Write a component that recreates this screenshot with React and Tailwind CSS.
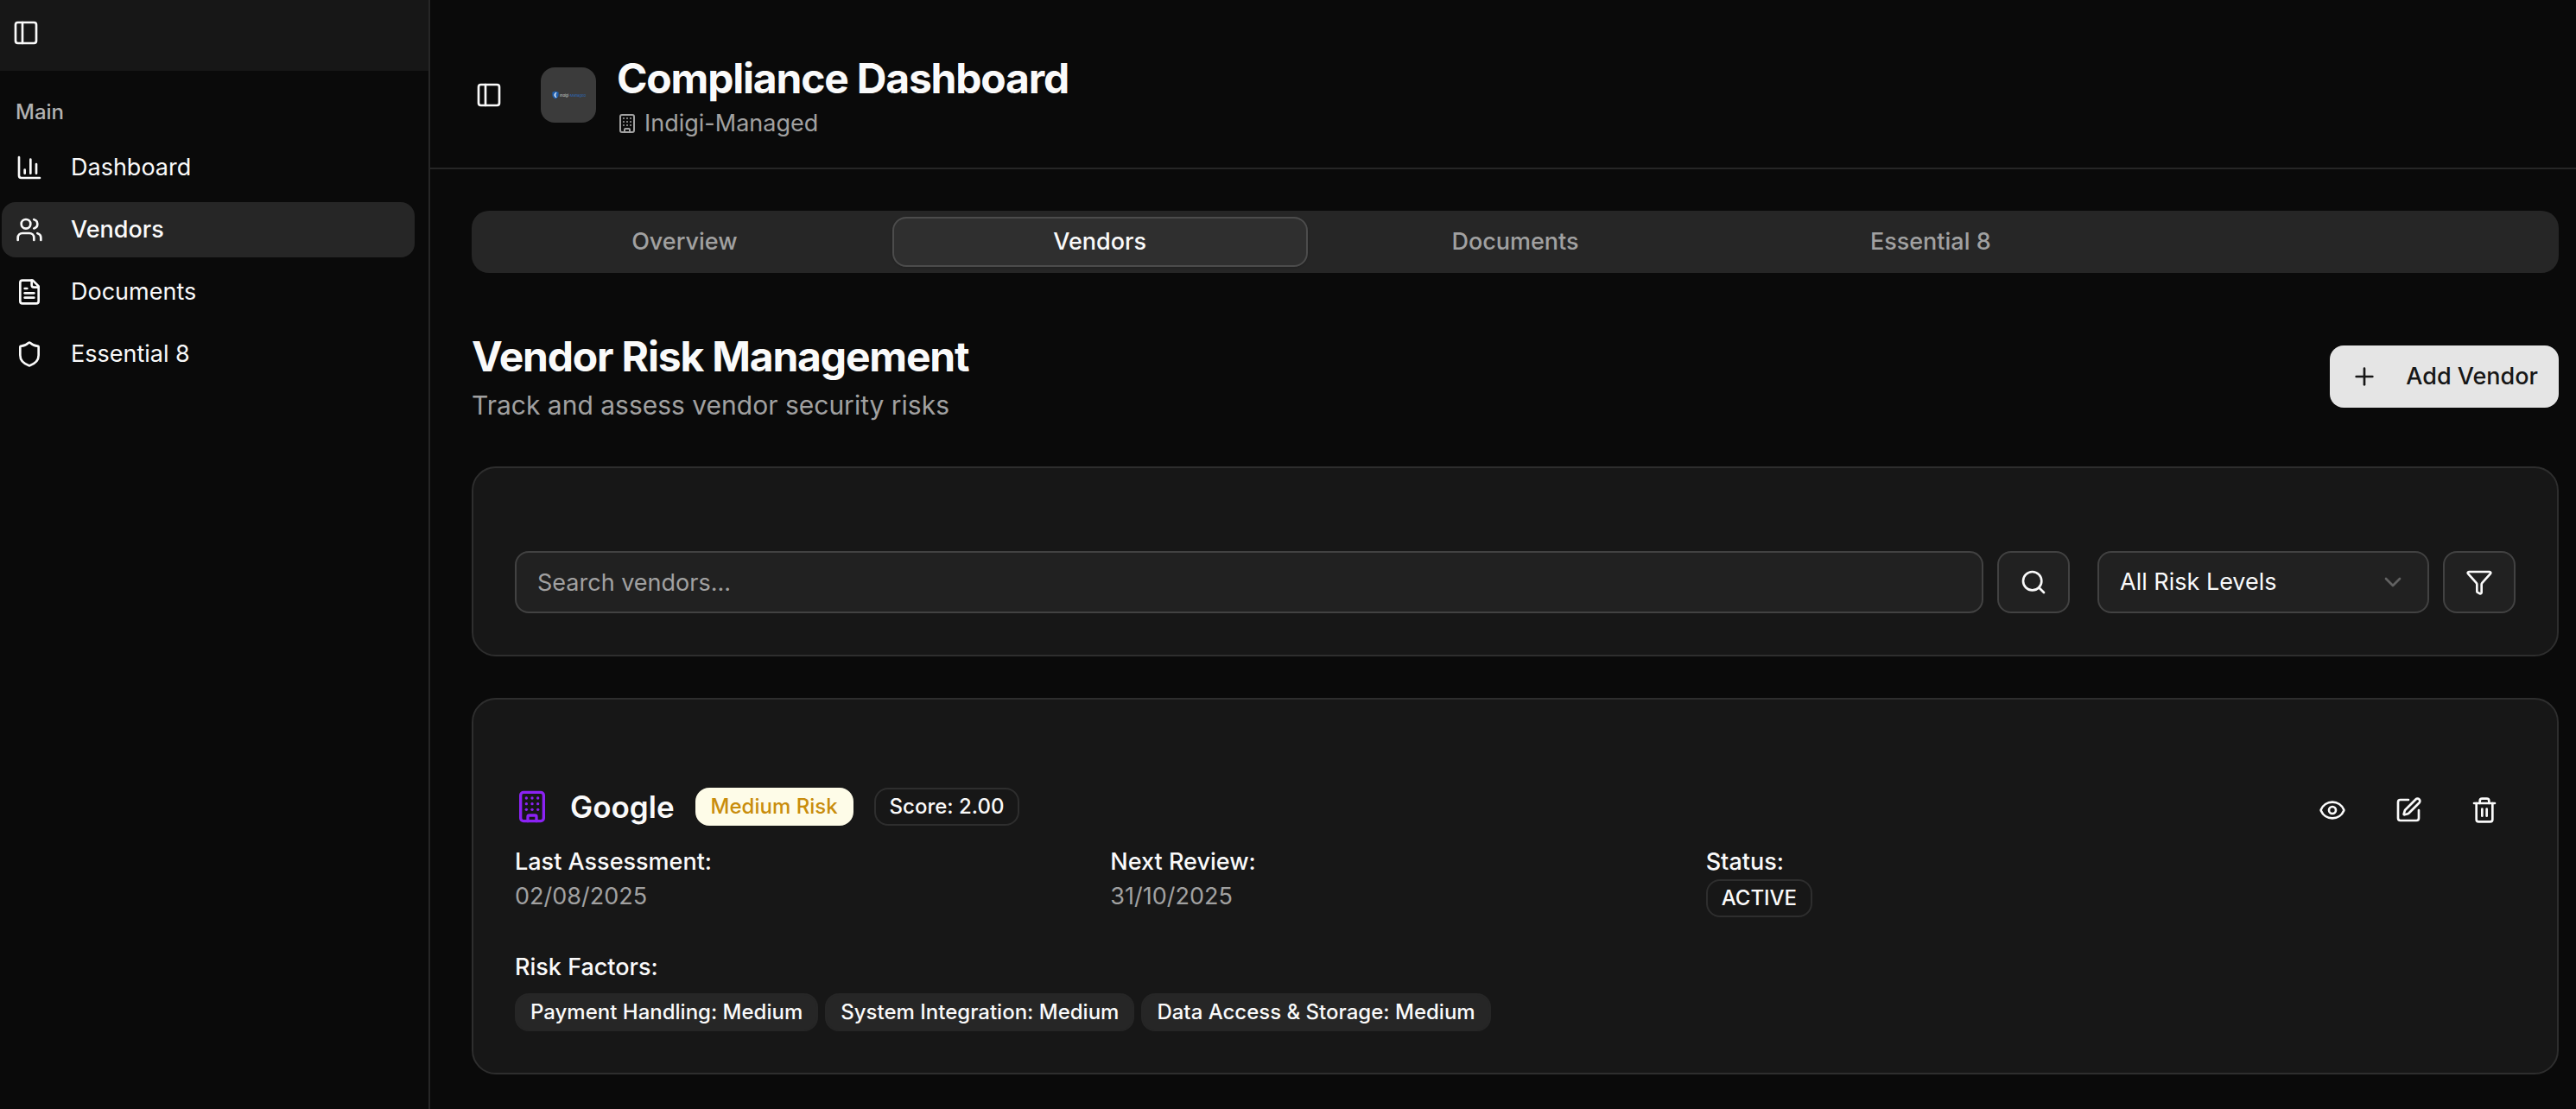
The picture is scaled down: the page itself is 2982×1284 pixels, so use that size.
import { useState } from "react";
import {
    Building,
    ChartColumn,
    ChevronDown,
    Eye,
    Funnel,
    PanelLeft,
    Plus,
    Search,
    Shield,
    SquarePen,
    Trash2,
    Users,
} from "lucide-react";

// File icon with the sharp folded corner
function FileIcon({ size }) {
    return (
        <svg
            width={size}
            height={size}
            viewBox="0 0 24 24"
            fill="none"
            stroke="currentColor"
            strokeWidth="2"
            strokeLinecap="round"
            strokeLinejoin="round"
        >
            <path d="M15 2H6a2 2 0 0 0-2 2v16a2 2 0 0 0 2 2h12a2 2 0 0 0 2-2V7Z" />
            <path d="M14 2v4a2 2 0 0 0 2 2h4" />
            <path d="M10 9H8" />
            <path d="M16 13H8" />
            <path d="M16 17H8" />
        </svg>
    );
}

const navItems = [
    { label: "Dashboard", icon: ChartColumn },
    { label: "Vendors", icon: Users },
    { label: "Documents", icon: FileIcon },
    { label: "Essential 8", icon: Shield },
];

const tabs = ["Overview", "Vendors", "Documents", "Essential 8"];

const vendors = [
    {
        id: 1,
        name: "Google",
        risk: "Medium Risk",
        score: "2.00",
        lastAssessment: "02/08/2025",
        nextReview: "31/10/2025",
        status: "ACTIVE",
        factors: [
            "Payment Handling: Medium",
            "System Integration: Medium",
            "Data Access & Storage: Medium",
        ],
    },
];

const badge =
    "inline-flex h-11 items-center rounded-2xl border-2 px-4 text-2xl font-medium whitespace-nowrap";

const iconButton =
    "flex h-[72px] w-[84px] shrink-0 items-center justify-center rounded-2xl border-2 border-[#424242] bg-[#212121]";

function Sidebar() {
    return (
        <aside className="w-[498px] shrink-0 border-r-2 border-[#262626]">
            <div className="bg-[#171717] pt-2.5 pb-4 pl-0.5">
                <button
                    aria-label="Toggle sidebar"
                    className="flex size-14 items-center justify-center"
                >
                    <PanelLeft size={32} />
                </button>
            </div>

            <nav className="pt-4 pr-4 pl-0.5">
                <p className="flex h-16 items-center px-4 text-2xl font-medium text-[#b2b2b2]">
                    Main
                </p>
                <ul className="flex flex-col gap-2">
                    {navItems.map(({ label, icon: Icon }) => (
                        <li key={label}>
                            <a
                                href="#"
                                className={
                                    label === "Vendors"
                                        ? "flex h-16 items-center gap-8 rounded-2xl bg-[#262626] px-4 text-[27px] font-medium"
                                        : "flex h-16 items-center gap-8 rounded-2xl px-4 text-[27px]"
                                }
                            >
                                <Icon size={32} />
                                <span>{label}</span>
                            </a>
                        </li>
                    ))}
                </ul>
            </nav>
        </aside>
    );
}

function Logo() {
    return (
        <div className="flex size-16 items-center justify-center rounded-2xl bg-[#3b3b3b]">
            <svg width="40" height="10" viewBox="0 0 40 10" fill="none">
                {/* shield with a crescent */}
                <path
                    d="M5 .5 8.6 1.8V5C8.6 7.3 7 8.8 5 9.6 3 8.8 1.4 7.3 1.4 5V1.8Z"
                    fill="#1f5fae"
                />
                <path d="M6 2.3A2.8 2.8 0 0 0 6 7.7 3.6 3.6 0 0 1 6 2.3Z" stroke="#f1f5fb" />
                <text x="10" y="6.5" fontSize="4" fontFamily="Inter, sans-serif" fill="#d4d4d4">
                    Indigi<tspan fill="#2b6cbf">-Managed</tspan>
                </text>
            </svg>
        </div>
    );
}

function Header() {
    return (
        <header className="flex items-center gap-8 border-b-2 border-[#262626] pt-[58px] pb-8 pl-10">
            <button
                aria-label="Toggle sidebar"
                className="flex size-14 items-center justify-center"
            >
                <PanelLeft size={32} />
            </button>
            <div className="flex items-center gap-6">
                <Logo />
                <div>
                    <h1 className="text-5xl leading-[66px] font-bold tracking-tight">
                        Compliance Dashboard
                    </h1>
                    <p className="flex items-center gap-2 text-[27px] leading-[38px] text-[#a1a1a1]">
                        <Building size={24} />
                        Indigi-Managed
                    </p>
                </div>
            </div>
        </header>
    );
}

function VendorCard({ vendor }) {
    return (
        <article className="flex items-start gap-8 rounded-[28px] border-2 border-[#2e2e2e] bg-[#171717] px-12 pt-24 pb-12">
            <div className="flex-1">
                <div className="mb-4 flex items-center gap-6">
                    <Building size={40} className="text-[#8b22f4]" />
                    <h3 className="text-[35px] leading-[56px] font-semibold">
                        {vendor.name}
                    </h3>
                    <span className={`${badge} border-[#fefce8] bg-[#fefce8] text-[#c98d0c]`}>
                        {vendor.risk}
                    </span>
                    <span className={`${badge} border-[#2e2e2e]`}>
                        Score: {vendor.score}
                    </span>
                </div>

                <div className="grid grid-cols-3 gap-8 text-[27px] leading-10">
                    <div>
                        <p className="font-medium">Last Assessment:</p>
                        <p className="text-[#a1a1a1]">{vendor.lastAssessment}</p>
                    </div>
                    <div>
                        <p className="font-medium">Next Review:</p>
                        <p className="text-[#a1a1a1]">{vendor.nextReview}</p>
                    </div>
                    <div className="flex flex-col items-start">
                        <p className="font-medium">Status:</p>
                        <span className={`${badge} border-[#2e2e2e]`}>
                            {vendor.status}
                        </span>
                    </div>
                </div>

                <p className="mt-[38px] text-[27px] leading-10 font-medium">
                    Risk Factors:
                </p>
                <div className="mt-2.5 flex flex-wrap gap-2">
                    {vendor.factors.map((factor) => (
                        <span
                            key={factor}
                            className={`${badge} border-[#262626] bg-[#262626]`}
                        >
                            {factor}
                        </span>
                    ))}
                </div>
            </div>

            <div className="flex gap-4">
                <button
                    aria-label="View vendor"
                    className="flex h-16 w-[72px] items-center justify-center"
                >
                    <Eye size={32} />
                </button>
                <button
                    aria-label="Edit vendor"
                    className="flex h-16 w-[72px] items-center justify-center"
                >
                    <SquarePen size={32} />
                </button>
                <button
                    aria-label="Delete vendor"
                    className="flex h-16 w-[72px] items-center justify-center"
                >
                    <Trash2 size={32} />
                </button>
            </div>
        </article>
    );
}

export default function App() {
    const [activeTab, setActiveTab] = useState("Vendors");
    const [search, setSearch] = useState("");

    return (
        <div className="flex min-h-screen bg-[#0a0a0a] font-['Inter',sans-serif] text-[#fafafa]">
            <Sidebar />

            <div className="min-w-0 flex-1">
                <Header />

                <main className="flex flex-col gap-12 pt-12 pr-5 pb-10 pl-12">
                    {/* Tabs */}
                    <div
                        role="tablist"
                        className="mb-4 grid h-[72px] grid-cols-5 items-center rounded-[20px] bg-[#262626] px-1.5"
                    >
                        {tabs.map((tab) => (
                            <button
                                key={tab}
                                role="tab"
                                aria-selected={tab === activeTab}
                                onClick={() => setActiveTab(tab)}
                                className={
                                    tab === activeTab
                                        ? "h-[58px] rounded-2xl border-2 border-[#4c4c4c] bg-[#2f2f2f] text-[27px] font-medium shadow-sm"
                                        : "h-[58px] rounded-2xl border-2 border-transparent text-[27px] font-medium text-[#a1a1a1]"
                                }
                            >
                                {tab}
                            </button>
                        ))}
                    </div>

                    {/* Page title */}
                    <div className="flex items-center justify-between">
                        <div>
                            <h2 className="text-5xl leading-[66px] font-bold tracking-tight">
                                Vendor Risk Management
                            </h2>
                            <p className="text-[30px] leading-[46px] text-[#a1a1a1]">
                                Track and assess vendor security risks
                            </p>
                        </div>
                        <button className="flex h-[72px] items-center gap-8 rounded-2xl bg-[#e5e5e5] px-6 text-[27px] font-medium text-[#171717]">
                            <Plus size={32} />
                            Add Vendor
                        </button>
                    </div>

                    {/* Filters */}
                    <section className="flex gap-8 rounded-[28px] border-2 border-[#2e2e2e] bg-[#171717] px-12 pt-24 pb-12">
                        <div className="flex flex-1 gap-4">
                            <input
                                type="text"
                                aria-label="Search vendors"
                                placeholder="Search vendors..."
                                value={search}
                                onChange={(e) => setSearch(e.target.value)}
                                className="h-[72px] min-w-0 flex-1 rounded-2xl border-2 border-[#424242] bg-[#212121] px-6 text-[27px] placeholder:text-[#a1a1a1]"
                            />
                            <button aria-label="Search" className={iconButton}>
                                <Search size={32} />
                            </button>
                        </div>
                        <div className="flex gap-4">
                            <div className="relative w-96">
                                <select
                                    aria-label="Risk level"
                                    className="h-[72px] w-full appearance-none rounded-2xl border-2 border-[#424242] bg-[#212121] px-6 text-[27px]"
                                >
                                    <option>All Risk Levels</option>
                                    <option>Low Risk</option>
                                    <option>Medium Risk</option>
                                    <option>High Risk</option>
                                </select>
                                <ChevronDown
                                    size={32}
                                    className="pointer-events-none absolute top-5 right-[26px] text-[#616161]"
                                />
                            </div>
                            <button aria-label="Filter" className={iconButton}>
                                <Funnel size={32} />
                            </button>
                        </div>
                    </section>

                    {vendors.map((vendor) => (
                        <VendorCard key={vendor.id} vendor={vendor} />
                    ))}
                </main>
            </div>
        </div>
    );
}
